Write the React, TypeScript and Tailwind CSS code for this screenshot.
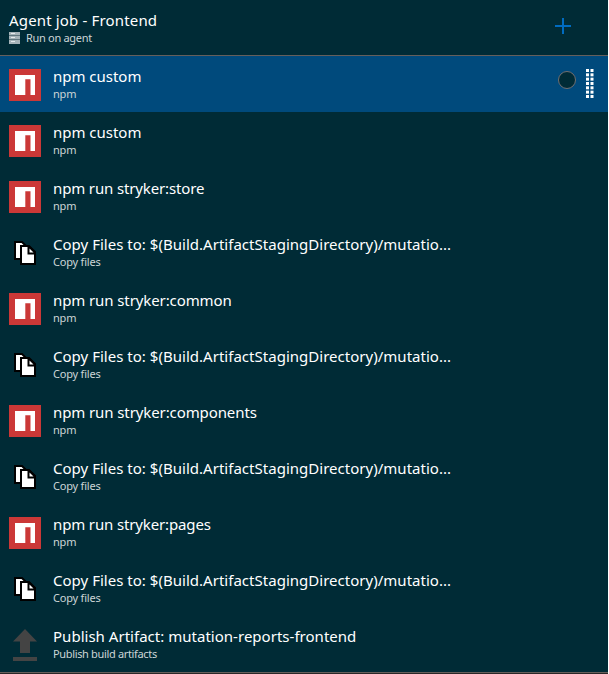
const copyStep = {
  title: 'Copy Files to: $(Build.ArtifactStagingDirectory)/mutatio...',
  sub: 'Copy files',
  kind: 'copy',
  titleFit: 'tracking-[0.021px]',
  subFit: 'tracking-[-0.2px]',
};

const steps = [
  { title: 'npm custom', sub: 'npm', kind: 'npm', titleFit: 'tracking-[-0.02px]', subFit: 'tracking-[-0.2px]' },
  { title: 'npm custom', sub: 'npm', kind: 'npm', titleFit: 'tracking-[-0.02px]', subFit: 'tracking-[-0.2px]' },
  { title: 'npm run stryker:store', sub: 'npm', kind: 'npm', titleFit: 'tracking-[-0.14px]', subFit: 'tracking-[-0.2px]' },
  copyStep,
  { title: 'npm run stryker:common', sub: 'npm', kind: 'npm', titleFit: 'tracking-[-0.1px]', subFit: 'tracking-[-0.2px]' },
  copyStep,
  { title: 'npm run stryker:components', sub: 'npm', kind: 'npm', titleFit: 'tracking-[-0.1px]', subFit: 'tracking-[-0.2px]' },
  copyStep,
  { title: 'npm run stryker:pages', sub: 'npm', kind: 'npm', titleFit: 'tracking-[-0.14px]', subFit: 'tracking-[-0.2px]' },
  copyStep,
  {
    title: 'Publish Artifact: mutation-reports-frontend',
    sub: 'Publish build artifacts',
    kind: 'publish',
    titleFit: 'tracking-[0.02px]',
    subFit: 'tracking-[-0.34px]',
  },
];

function StepIcon({ kind }: { kind: string }) {
  if (kind === 'npm') {
    return (
      <svg className="mt-[13px] size-8 shrink-0" viewBox="0 0 32 32">
        <path fill="#cb3837" d="M0 0h32v32H0z" />
        <path fill="#fff" d="M6 6h20v20h-4.5V10.3h-5.2V26H6z" />
      </svg>
    );
  }
  if (kind === 'copy') {
    return (
      <svg className="mt-[13px] size-8 shrink-0" viewBox="0 0 32 32" fill="#fff" stroke="#000" strokeWidth="2">
        <path d="M6 5h7l5 5v12H6z" />
        <path d="M12 9h8l6 6v12H12z" />
        <path fill="#000" stroke="none" d="M18.5 9h2.5l6 6v2.5h-8.5z" />
        <path stroke="none" d="M20.5 11.5v4h4z" />
      </svg>
    );
  }
  return (
    <svg className="mt-[13px] size-8 shrink-0" viewBox="0 0 32 32" fill="#444">
      <path d="M16 0L28 12.5h-7V24H11V12.5H4zM4 28h24v4H4z" />
    </svg>
  );
}

function DragHandle() {
  return (
    <svg className="h-[29px] w-2 shrink-0" viewBox="0 0 8 29" fill="#fff">
      {[0, 1, 2, 3, 4, 5, 6].map((n) => (
        <g key={n}>
          <rect x="0" y={n * 4.33} width="3" height="3" />
          <rect x="4.5" y={n * 4.33} width="3" height="3" />
        </g>
      ))}
    </svg>
  );
}

export default function App() {
  return (
    <div className="h-[674px] w-[609px] bg-white pr-px">
      <div className="flex h-full flex-col bg-[#002b36] font-['Noto_Sans','Open_Sans',sans-serif] text-white">
        <header className="flex h-14 shrink-0 justify-between border-b border-[#665f5b] pl-[9px] pr-[37px]">
          <div className="pt-[10px]">
            <div className="whitespace-pre text-[15px] leading-5 tracking-[0.16px]">Agent job - Frontend</div>
            <div className="mt-px flex items-center gap-[6px] text-[11px] leading-[14px] text-[#ccd5d7]">
              <svg className="h-3 w-[11px]" viewBox="0 0 11 12">
                <path fill="#a5b3b8" d="M0 0h11v12H0z" />
                <path stroke="#60767e" d="M0 3.5h11M0 7.5h11" />
                <path stroke="#e5eaec" d="M2 1.5h4M2 5.5h4M2 9.5h4" />
              </svg>
              <span className="whitespace-pre tracking-[-0.31px]">Run on agent</span>
            </div>
          </div>
          <svg className="mt-[18px] h-4 w-4" viewBox="0 0 16 16">
            <path d="M8 0v16M0 8h16" stroke="#006bc0" strokeWidth="2" />
          </svg>
        </header>
        <main>
          {steps.map((s, i) => (
            <div key={i} className={`flex h-14 pl-[9px] ${i === 0 ? 'bg-[#004a7c]' : ''}`}>
              <StepIcon kind={s.kind} />
              <div className="ml-3 flex-1 whitespace-pre pt-[10px]">
                <div className={`text-[15px] leading-5 ${s.titleFit}`}>{s.title}</div>
                <div className={`mt-px text-[11px] leading-[14px] text-[#ccd5d7] ${s.subFit}`}>{s.sub}</div>
              </div>
              {i === 0 && (
                <div className="flex gap-[10px] pr-[14px] pt-[13px]">
                  <div className="mt-[2px] size-[18px] rounded-full border border-[#716f70] bg-[#002b36]" />
                  <DragHandle />
                </div>
              )}
            </div>
          ))}
        </main>
        <div className="h-px bg-[#665f5b]" />
        <div className="h-px bg-[#2a2727]" />
      </div>
    </div>
  );
}
